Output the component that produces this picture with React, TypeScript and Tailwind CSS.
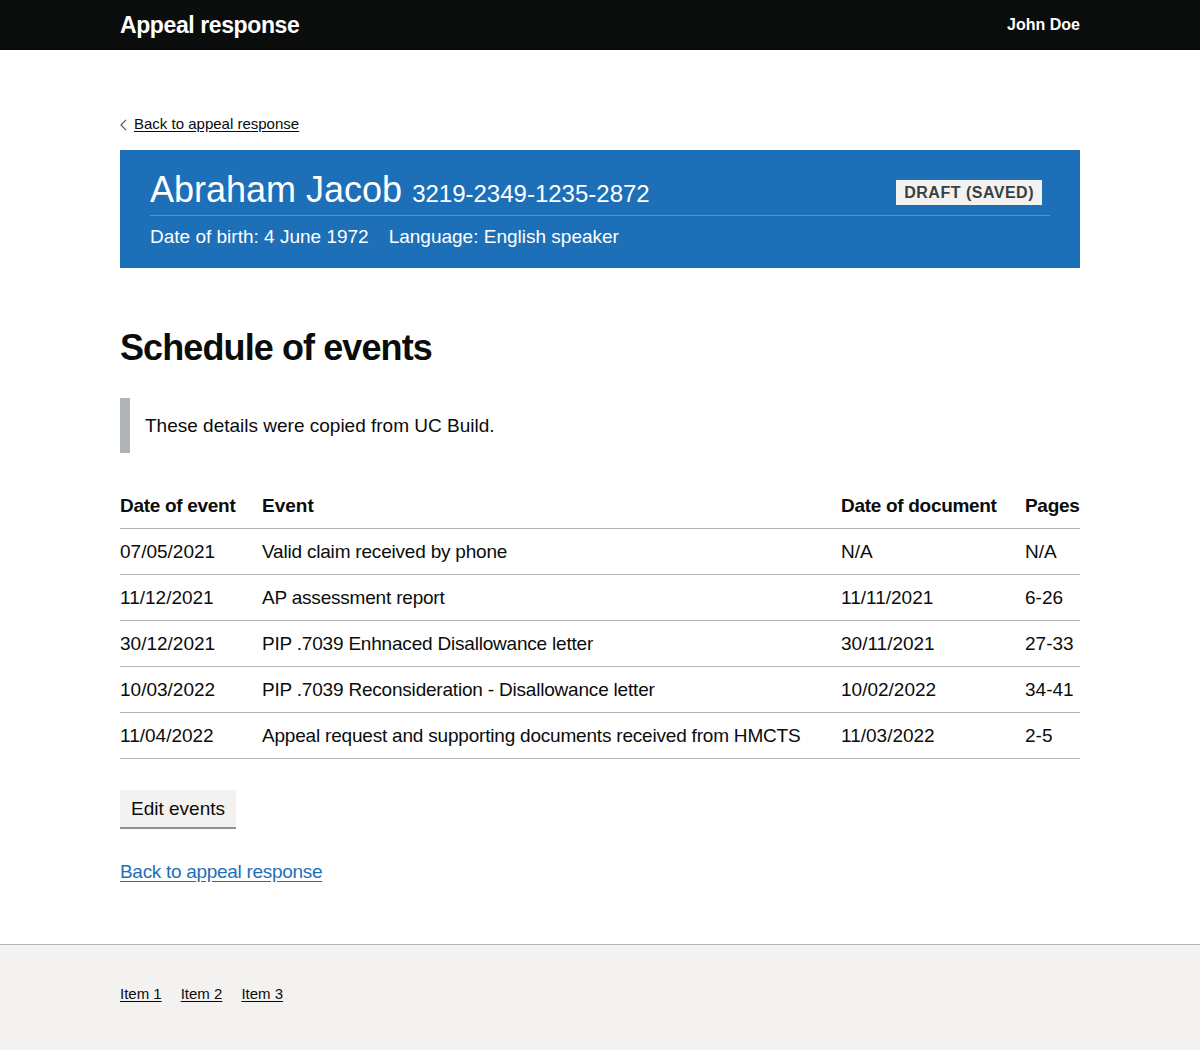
import React from 'react';

const FONT = "font-['Liberation_Sans',Arial,sans-serif]";

const EVENTS = [
  { date: '07/05/2021', event: 'Valid claim received by phone', docDate: 'N/A', pages: 'N/A' },
  { date: '11/12/2021', event: 'AP assessment report', docDate: '11/11/2021', pages: '6-26' },
  { date: '30/12/2021', event: 'PIP .7039 Enhnaced Disallowance letter', docDate: '30/11/2021', pages: '27-33' },
  { date: '10/03/2022', event: 'PIP .7039 Reconsideration - Disallowance letter', docDate: '10/02/2022', pages: '34-41' },
  { date: '11/04/2022', event: 'Appeal request and supporting documents received from HMCTS', docDate: '11/03/2022', pages: '2-5' },
];

function Header() {
  return (
    <header className="bg-[#0b0c0c] h-[50px]">
      <div className="mx-[120px] h-full flex items-center justify-between">
        <span className="text-white font-bold text-[23px] leading-[30px] tracking-[-0.4px]">Appeal response</span>
        <span className="text-white font-bold text-[16px] leading-[20px] -mt-[1px]">John Doe</span>
      </div>
    </header>
  );
}

function BackLink() {
  return (
    <a href="#" className="flex items-center gap-[7px] text-[#0b0c0c] text-[15px] leading-[20px]">
      <svg width="7" height="12" viewBox="0 0 7 12" className="mt-[1px]">
        <path d="M6 0.8 L1 6 L6 11.2" fill="none" stroke="#505a5f" strokeWidth="1.2" />
      </svg>
      <span className="underline underline-offset-[2px]">Back to appeal response</span>
    </a>
  );
}

function Banner() {
  return (
    <div className="bg-[#1d70b8] px-[30px] pt-[20px] pb-[19px] text-white">
      <div className="flex items-center justify-between border-b border-[#5694ca] pb-[5px]">
        <div className="flex items-baseline gap-[10px]">
          <span className="text-[36px] leading-[40px]">Abraham Jacob</span>
          <span className="text-[24px] leading-[28px]">3219-2349-1235-2872</span>
        </div>
        <span className="mr-[8px] mt-[4px] bg-[#f3f2f1] text-[#383f43] font-bold text-[16px] leading-[25px] tracking-[0.5px] px-[8px]">
          DRAFT (SAVED)
        </span>
      </div>
      <div className="flex gap-[20px] pt-[8px] text-[19px] leading-[25px]">
        <span>Date of birth: 4 June 1972</span>
        <span>Language: English speaker</span>
      </div>
    </div>
  );
}

function EventsTable() {
  return (
    <table className="w-full border-collapse text-[19px] leading-[25px] text-[#0b0c0c]">
      <thead>
        <tr className="border-b border-[#b1b4b6]">
          <th className="w-[142px] text-left font-bold py-[10px] pr-[20px] tracking-[-0.3px]">Date of event</th>
          <th className="text-left font-bold py-[10px] pr-[20px]">Event</th>
          <th className="w-[184px] text-left font-bold py-[10px] pr-[20px] tracking-[-0.3px]">Date of document</th>
          <th className="w-[55px] text-left font-bold py-[10px] tracking-[-0.3px]">Pages</th>
        </tr>
      </thead>
      <tbody>
        {EVENTS.map((e) => (
          <tr key={e.date} className="border-b border-[#b1b4b6]">
            <td className="py-[10px] pr-[20px]">{e.date}</td>
            <td className="py-[10px] pr-[20px] tracking-[-0.2px]">{e.event}</td>
            <td className="py-[10px] pr-[20px]">{e.docDate}</td>
            <td className="py-[10px]">{e.pages}</td>
          </tr>
        ))}
      </tbody>
    </table>
  );
}

export default function App() {
  return (
    <div className={`${FONT} min-h-[1050px] flex flex-col bg-white text-[#0b0c0c]`}>
      <Header />
      <main className="flex-1 mx-[120px] pt-[64px] pb-[59px]">
        <BackLink />
        <div className="mt-[16px]">
          <Banner />
        </div>
        <h1 className="mt-[60px] text-[36px] leading-[40px] font-bold tracking-[-0.9px]">Schedule of events</h1>
        <div className="mt-[30px] border-l-[10px] border-[#b1b4b6] p-[15px] text-[19px] leading-[25px]">
          These details were copied from UC Build.
        </div>
        <div className="mt-[30px]">
          <EventsTable />
        </div>
        <button className="mt-[31px] bg-[#f3f2f1] shadow-[0_2px_0_#929191] px-[11px] pt-[7px] pb-[6px] text-[19px] leading-[24px] text-[#0b0c0c]">
          Edit events
        </button>
        <div className="mt-[32px]">
          <a href="#" className="text-[#1d70b8] text-[19px] leading-[25px] tracking-[-0.3px] underline underline-offset-[3px]">
            Back to appeal response
          </a>
        </div>
      </main>
      <footer className="bg-[#f3f2f1] border-t border-[#b1b4b6] h-[106px] pt-[39px]">
        <div className="mx-[120px] flex gap-[19px] text-[15px] leading-[20px]">
          <a href="#" className="underline underline-offset-[2px] text-[#0b0c0c]">Item 1</a>
          <a href="#" className="underline underline-offset-[2px] text-[#0b0c0c]">Item 2</a>
          <a href="#" className="underline underline-offset-[2px] text-[#0b0c0c]">Item 3</a>
        </div>
      </footer>
    </div>
  );
}
